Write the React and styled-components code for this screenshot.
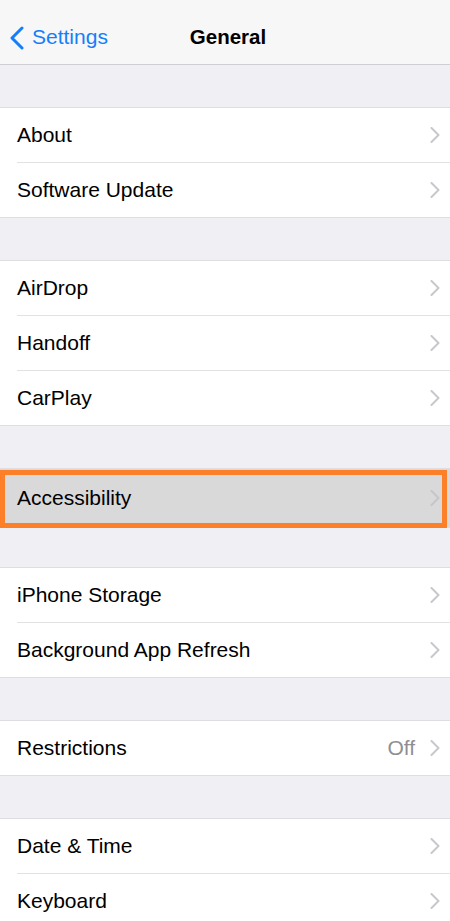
import React from "react";
import styled, { createGlobalStyle } from "styled-components";

const GlobalStyle = createGlobalStyle`
  html, body {
    margin: 0;
    padding: 0;
    background: #efeff4;
    font-family: "Liberation Sans", Arial, sans-serif;
    -webkit-font-smoothing: antialiased;
  }
`;

const groups = [
  { items: [{ label: "About" }, { label: "Software Update" }] },
  { items: [{ label: "AirDrop" }, { label: "Handoff" }, { label: "CarPlay" }] },
  { items: [{ label: "Accessibility" }], highlighted: true },
  { items: [{ label: "iPhone Storage" }, { label: "Background App Refresh" }], gap: 39 },
  { items: [{ label: "Restrictions", value: "Off" }] },
  { items: [{ label: "Date & Time" }, { label: "Keyboard" }] },
];

function Chevron({ faded }) {
  return (
    <ChevronIcon viewBox="0 0 10 16" $faded={faded}>
      <polyline points="1.5,1 8.5,8 1.5,15" />
    </ChevronIcon>
  );
}

export default function App() {
  return (
    <>
      <GlobalStyle />
      <Screen>
        <NavBar>
          <BackButton>
            <BackIcon viewBox="0 0 16 24">
              <polyline points="13,2 3,12 13,22" />
            </BackIcon>
            Settings
          </BackButton>
          <Title>General</Title>
        </NavBar>

        {groups.map((group, gi) => (
          <Group key={gi} $gap={group.gap}>
            {group.items.map((item) => (
              <Row key={item.label} $highlighted={group.highlighted}>
                <Label>{item.label}</Label>
                <Accessory>
                  {item.value && <Value>{item.value}</Value>}
                  <Chevron faded={group.highlighted} />
                </Accessory>
                {group.highlighted && <Outline />}
              </Row>
            ))}
          </Group>
        ))}
      </Screen>
    </>
  );
}

const Screen = styled.div`
  display: flex;
  flex-direction: column;
  height: 921px;
  background: #efeff4;
  overflow: hidden;
`;

const NavBar = styled.header`
  position: relative;
  display: flex;
  flex-shrink: 0;
  align-items: center;
  justify-content: center;
  height: 54px;
  padding-top: 10px;
  background: #f7f7f7;
  border-bottom: 1px solid #cfcfd2;
`;

const BackButton = styled.div`
  position: absolute;
  left: 9px;
  top: 10px;
  height: 54px;
  display: flex;
  align-items: center;
  gap: 7px;
  color: #157efb;
  font-size: 21px;
`;

const BackIcon = styled.svg`
  width: 16px;
  height: 24px;
  margin-top: 1px;
  fill: none;
  stroke: #157efb;
  stroke-width: 3;
  stroke-linecap: round;
  stroke-linejoin: round;
`;

const Title = styled.h1`
  margin: 0 0 0 6px;
  font-size: 20.5px;
  font-weight: 700;
  color: #000;
`;

const Group = styled.section`
  display: flex;
  flex-direction: column;
  flex-shrink: 0;
  margin-top: ${(p) => p.$gap ?? 42}px;
  background: #fff;
  border-top: 1px solid #dedee2;
  border-bottom: 1px solid #dedee2;
`;

const Row = styled.div`
  position: relative;
  display: flex;
  align-items: center;
  justify-content: space-between;
  height: ${(p) => (p.$highlighted ? 58 : 54)}px;
  padding: 0 10px 0 17px;
  background: ${(p) => (p.$highlighted ? "#d9d9d9" : "#fff")};

  & + & {
    border-top: 1px solid transparent;
  }

  & + &::before {
    content: "";
    position: absolute;
    top: -1px;
    left: 17px;
    right: 0;
    height: 1px;
    background: #e2e2e4;
  }
`;

const Label = styled.span`
  font-size: 21px;
  color: #000;
`;

const Accessory = styled.div`
  display: flex;
  align-items: center;
  gap: 15px;
`;

const Value = styled.span`
  font-size: 21px;
  color: #8e8e93;
`;

const ChevronIcon = styled.svg`
  width: 10px;
  height: 16px;
  fill: none;
  stroke: ${(p) => (p.$faded ? "#c6c6c8" : "#c7c7cc")};
  stroke-width: 2;
  stroke-linecap: round;
  stroke-linejoin: round;
`;

const Outline = styled.div`
  position: absolute;
  top: 1px;
  left: 0;
  right: 3px;
  bottom: -1px;
  border: 5px solid #fd7f28;
  pointer-events: none;
`;
